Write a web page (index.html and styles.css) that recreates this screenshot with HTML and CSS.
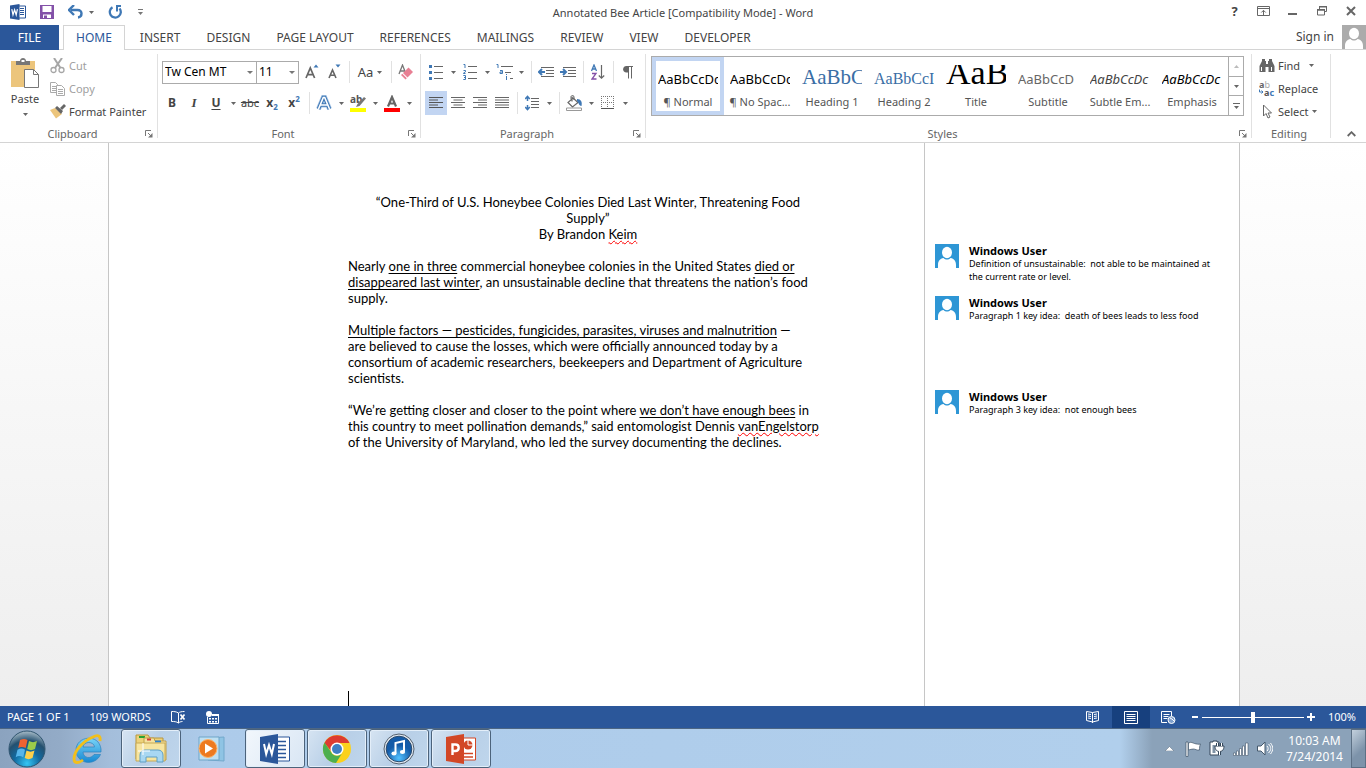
FILE: index.html
```html
<!DOCTYPE html>
<html lang="en">
<head>
<meta charset="utf-8">
<title>Annotated Bee Article [Compatibility Mode] - Word</title>
<link rel="stylesheet" href="styles.css">
</head>
<body>
<svg class="defs" aria-hidden="true">
  <symbol id="caret" viewBox="0 0 5 3"><path d="M0 0h5L2.5 3z" fill="#666"/></symbol>
  <symbol id="launcher" viewBox="0 0 8 8"><path d="M.5 6V.5H6" fill="none" stroke="#777"/><path d="M3 3l3 3" stroke="#777"/><path d="M7.500 3v4.500H3z" fill="#777"/></symbol>
  <symbol id="person" viewBox="0 0 24 24"><ellipse cx="12" cy="8.500" rx="5" ry="5.700" fill="#fff"/><path d="M3 24v-3c0-4 2-6.500 5.500-7 2 2 5 2 7 0 3.500.5 5.500 3 5.500 7v3z" fill="#fff"/></symbol>
</svg>

<header class="titlebar">
  <div class="quick">
    <svg width="16" height="16" viewBox="0 0 16 16"><path d="M8 2h7.500v12H8z" fill="#fff" stroke="#2b579a"/><path d="M10 4.500h4M10 6.500h4M10 8.500h4M10 10.500h4" stroke="#2b579a"/><path d="M0 1.500L9.500 0v16L0 14.500z" fill="#2b579a"/><path d="M1.800 5.200l1.200 5.600 1.600-5 1.600 5 1.200-5.600" fill="none" stroke="#fff" stroke-width="1.200"/></svg>
    <button class="q-btn save" aria-label="Save"><svg width="14" height="14" viewBox="0 0 14 14"><path d="M0 0h14v14H0z" fill="#8351a8"/><path d="M2.500 1h9v6h-9zM3 9.500h8V13H3z" fill="#fff"/><path d="M4 10.500h3V14H4z" fill="#8351a8"/></svg></button>
    <button class="q-btn undo" aria-label="Undo"><svg width="15" height="14" viewBox="0 0 15 14"><path d="M3 5h6.500c5.500 0 5 7 .5 7.500" fill="none" stroke="#3f78b5" stroke-width="2.400"/><path d="M6 0L1 5l5 5" fill="none" stroke="#3f78b5" stroke-width="2.400"/></svg></button>
    <button class="q-btn" aria-label="Undo list"><svg width="5" height="3"><use href="#caret"/></svg></button>
    <button class="q-btn redo" aria-label="Repeat"><svg width="15" height="14" viewBox="0 0 15 14"><path d="M4.500 2.300A5.500 5.500 0 1 0 11.500 3.500" fill="none" stroke="#3f78b5" stroke-width="2.300"/><path d="M8 1h5M9 .5v6" fill="none" stroke="#3f78b5" stroke-width="2"/></svg></button>
    <button class="q-btn" aria-label="Customize Quick Access Toolbar"><svg width="5" height="6" viewBox="0 0 5 6"><path d="M0 .5h5" stroke="#777"/><path d="M0 3h5L2.500 6z" fill="#777"/></svg></button>
  </div>
  <h1 class="window-title">Annotated Bee Article [Compatibility Mode] - Word</h1>
  <div class="window-controls">
    <button class="help" aria-label="Help">?</button>
    <button aria-label="Ribbon Display Options"><svg width="13" height="10" viewBox="0 0 13 10"><path d="M.5.5h12v9H.5zM.5 2.500h12" fill="none" stroke="#666"/><path d="M6.500 9V4.500M4.300 6.500l2.200-2.200 2.200 2.200" fill="none" stroke="#666"/></svg></button>
    <button aria-label="Minimize"><svg width="9" height="10" viewBox="0 0 9 10"><path d="M0 7h9v2H0z" fill="#666"/></svg></button>
    <button aria-label="Restore Down"><svg width="10" height="10" viewBox="0 0 10 10"><path d="M2.500 3V.5h7v5H8" fill="none" stroke="#666"/><path d="M.5 4h7v5h-7z" fill="none" stroke="#666"/><path d="M0 3h8v1.500H0zM2 0h8v1.500H2z" fill="#666"/></svg></button>
    <button aria-label="Close"><svg width="10" height="10" viewBox="0 0 10 10"><path d="M1 1l8 8M9 1L1 9" stroke="#666" stroke-width="2"/></svg></button>
  </div>
</header>

<nav class="tabs">
  <a class="tab file" href="#">FILE</a>
  <a class="tab active" href="#">HOME</a>
  <a class="tab" href="#">INSERT</a>
  <a class="tab" href="#">DESIGN</a>
  <a class="tab" href="#">PAGE LAYOUT</a>
  <a class="tab" href="#">REFERENCES</a>
  <a class="tab" href="#">MAILINGS</a>
  <a class="tab" href="#">REVIEW</a>
  <a class="tab" href="#">VIEW</a>
  <a class="tab" href="#">DEVELOPER</a>
  <a class="signin" href="#">Sign in<svg class="account" width="24" height="24"><use href="#person"/></svg></a>
</nav>

<div class="ribbon">
  <section class="group clipboard">
    <div class="group-body clip-body">
      <button class="paste"><svg width="30" height="31" viewBox="0 0 30 31"><path d="M1 3h24v26H1z" fill="#ecc57c"/><path d="M6 3h4c0-4 6-4 6 0h4v4H6z" fill="#777"/><path d="M11.500 2h3v2h-3z" fill="#fff"/><path d="M14.500 11.500h9l5 5v13h-14z" fill="#fff" stroke="#777"/><path d="M23.500 11.500v5h5" fill="none" stroke="#777"/></svg><span>Paste</span><svg width="5" height="3"><use href="#caret"/></svg></button>
      <div class="clip-list">
        <button class="row-btn off"><svg width="16" height="16" viewBox="0 0 16 16"><path d="M4 0l6.500 10M12 0L5 10" stroke="#a6a6a6" stroke-width="2"/><circle cx="3.500" cy="12" r="2.500" fill="none" stroke="#a6a6a6" stroke-width="1.300"/><circle cx="11.500" cy="12" r="2.500" fill="none" stroke="#a6a6a6" stroke-width="1.300"/></svg>Cut</button>
        <button class="row-btn off"><svg width="16" height="16" viewBox="0 0 16 16"><path d="M.5 1.500h5l2 2v8h-7zM2 5.500h4M2 7.500h4M2 9.500h4" fill="none" stroke="#aaa"/><path d="M6.500 4.500h5l3 3v7h-8z" fill="#fff" stroke="#aaa"/><path d="M8 8.500h5M8 10.500h5M8 12.500h5" stroke="#aaa"/></svg>Copy</button>
        <button class="row-btn"><svg width="16" height="16" viewBox="0 0 16 16"><path d="M0 6l5-2 7 6-6 4.500z" fill="#ecc57c"/><path d="M5 4l2-2 6 5-2 3z" fill="#666"/><path d="M10 4l4-4 2 2-4 4z" fill="#666"/></svg>Format Painter</button>
      </div>
    </div>
    <div class="group-label"><span>Clipboard</span><button aria-label="Clipboard options"><svg width="8" height="8"><use href="#launcher"/></svg></button></div>
  </section>

  <section class="group font">
    <div class="group-body">
      <div class="tools combos">
        <span class="combo family"><select aria-label="Font"><option>Tw Cen MT</option></select></span>
        <span class="combo size"><select aria-label="Font size"><option>11</option></select></span>
        <button class="tool" aria-label="Increase Font Size"><svg width="14" height="16" viewBox="0 0 14 16"><path d="M1 14L5.300 4l4.300 10M2.500 10.700h5.800" fill="none" stroke="#666" stroke-width="1.700"/><path d="M8.500 3.500l2.500-3 2.500 3z" fill="#3f78b5"/></svg></button>
        <button class="tool" aria-label="Decrease Font Size"><svg width="14" height="16" viewBox="0 0 14 16"><path d="M2 14l3.500-8L9 14M3.300 11.300h4.500" fill="none" stroke="#666" stroke-width="1.600"/><path d="M8.500.5L11 3.500l2.500-3z" fill="#3f78b5"/></svg></button>
        <i class="sep"></i>
        <button class="tool case">Aa <svg width="5" height="3"><use href="#caret"/></svg></button>
        <i class="sep"></i>
        <button class="tool" aria-label="Clear Formatting"><svg width="16" height="16" viewBox="0 0 16 16"><path d="M1 10L4.500 1 8 10M2.300 7h4.500" fill="none" stroke="#777" stroke-width="1.300"/><path d="M10.500 3.500L15 8l-5.500 5.500L5 9z" fill="#e87f93"/><path d="M4.300 9.800l4.500 4.500-1.300 1.200L3 11z" fill="#e87f93"/></svg></button>
      </div>
      <div class="tools row2">
        <button class="tool b">B</button><button class="tool i">I</button><button class="tool u">U</button><button class="drop" aria-label="Underline styles"><svg width="5" height="3"><use href="#caret"/></svg></button>
        <button class="tool s">abc</button><button class="tool b">x<sub>2</sub></button><button class="tool b">x<sup>2</sup></button>
        <i class="sep"></i>
        <button class="tool" aria-label="Text Effects"><svg width="16" height="16" viewBox="0 0 16 16"><path d="M2.500 14L7.300 2.500h1.400l4.800 11.500M4.700 10h6.600" fill="none" stroke="#a9c6e6" stroke-width="5"/><path d="M2.500 14L7.300 2.500h1.400l4.800 11.500M4.700 10h6.600" fill="none" stroke="#3f78b5" stroke-width="3.600"/><path d="M2.500 14L7.300 2.500h1.400l4.800 11.500M4.700 10h6.600" fill="none" stroke="#fff" stroke-width="1.600"/></svg></button><button class="drop" aria-label="Effects list"><svg width="5" height="3"><use href="#caret"/></svg></button>
        <button class="tool" aria-label="Highlight Color"><svg class="over" width="17" height="17" viewBox="0 0 17 17"><text x="0" y="8" font-size="10" font-weight="700" fill="#555">ab</text><path d="M14 2l2 1.500L9.500 11 6 12l1.500-3z" fill="#777"/><path d="M0 13h16v4H0z" fill="#ff0"/></svg></button><button class="drop" aria-label="Highlight list"><svg width="5" height="3"><use href="#caret"/></svg></button>
        <button class="tool" aria-label="Font Color"><svg width="17" height="17" viewBox="0 0 17 17"><path d="M4 11.500L8 2l4 9.500M5.500 8.500h5" fill="none" stroke="#666" stroke-width="2.200"/><path d="M0 13h16v4H0z" fill="red"/></svg></button><button class="drop" aria-label="Font color list"><svg width="5" height="3"><use href="#caret"/></svg></button>
      </div>
    </div>
    <div class="group-label"><span>Font</span><button aria-label="Font options"><svg width="8" height="8"><use href="#launcher"/></svg></button></div>
  </section>

  <section class="group paragraph">
    <div class="group-body">
      <div class="tools combos">
        <button class="tool" aria-label="Bullets"><svg width="14" height="16" viewBox="0 0 14 16"><path d="M5 2.500h9M5 8.500h9M5 14.500h9" stroke="#666"/><path d="M0 1h3v3H0zM0 7h3v3H0zM0 13h3v3H0z" fill="#3f78b5"/></svg></button><button class="drop" aria-label="Bullet list"><svg width="5" height="3"><use href="#caret"/></svg></button>
        <button class="tool" aria-label="Numbering"><svg width="14" height="16" viewBox="0 0 14 16"><path d="M5 2.500h9M5 8.500h9M5 14.500h9" stroke="#666"/><path d="M.5.5H2V4M.5 6.500h2v1.300l-2 1.200v.5h2M.3 11.500h2.200v4H.3M1 13.500h1.500" fill="none" stroke="#3f78b5"/></svg></button><button class="drop" aria-label="Numbering list"><svg width="5" height="3"><use href="#caret"/></svg></button>
        <button class="tool" aria-label="Multilevel List"><svg width="17" height="16" viewBox="0 0 17 16"><path d="M5 2.500h12M9 8.500h6M14 14.500h3" stroke="#666"/><path d="M.5.500H2V4M4 6.500h2.500v3H4V8h2.500M10.500 10v1M10.500 12v4" fill="none" stroke="#3f78b5"/></svg></button><button class="drop" aria-label="Multilevel styles"><svg width="5" height="3"><use href="#caret"/></svg></button>
        <i class="sep"></i>
        <button class="tool" aria-label="Decrease Indent"><svg width="16" height="12" viewBox="0 0 16 12"><path d="M3 1.500h13M8 4.500h8M8 7.500h8M3 10.500h13" stroke="#666"/><path d="M7 6H2M4 3L1 6l3 3" fill="none" stroke="#3f78b5" stroke-width="2"/></svg></button>
        <button class="tool" aria-label="Increase Indent"><svg width="16" height="12" viewBox="0 0 16 12"><path d="M3 1.500h13M8 4.500h8M8 7.500h8M3 10.500h13" stroke="#666"/><path d="M0 6h5M3 3l3 3-3 3" fill="none" stroke="#3f78b5" stroke-width="2"/></svg></button>
        <i class="sep"></i>
        <button class="tool" aria-label="Sort"><svg width="14" height="16" viewBox="0 0 14 16"><path d="M.5 7L3 1l2.500 6M1.300 5h3.400" fill="none" stroke="#3f78b5" stroke-width="1.300"/><path d="M1 9.500h4L1 15h4.500" fill="none" stroke="#8351a8" stroke-width="1.300"/><path d="M10.500 1v13M7.800 11.500l2.700 2.700 2.700-2.700" fill="none" stroke="#666" stroke-width="1.200"/></svg></button>
        <i class="sep"></i>
        <button class="tool" aria-label="Show paragraph marks"><svg width="10" height="13" viewBox="0 0 10 13"><path d="M5 0H3.500C-1 0-1 6.500 3.500 6.500H5z" fill="#666"/><path d="M5.500 0v12.500M8.500 0v12.500M3 .5h7" stroke="#666"/></svg></button>
      </div>
      <div class="tools">
        <button class="tool on" aria-label="Align Left"><svg width="14" height="12" viewBox="0 0 14 12"><path d="M0 .5h14M0 3h9M0 5.500h14M0 8h9M0 10.500h14" stroke="#555"/></svg></button>
        <button class="tool" aria-label="Center"><svg width="14" height="12" viewBox="0 0 14 12"><path d="M0 .5h14M2.500 3h9M0 5.500h14M2.500 8h9M0 10.500h14" stroke="#666"/></svg></button>
        <button class="tool" aria-label="Align Right"><svg width="14" height="12" viewBox="0 0 14 12"><path d="M0 .5h14M5 3h9M0 5.500h14M5 8h9M0 10.500h14" stroke="#666"/></svg></button>
        <button class="tool" aria-label="Justify"><svg width="14" height="12" viewBox="0 0 14 12"><path d="M0 .5h14M0 3h14M0 5.500h14M0 8h14M0 10.500h14" stroke="#666"/></svg></button>
        <i class="sep"></i>
        <button class="tool" aria-label="Line Spacing"><svg width="14" height="16" viewBox="0 0 14 16"><path d="M6 3.500h8M6 6.500h8M6 9.500h8M6 12.500h8" stroke="#666"/><path d="M2.500 1v5M.2 4l2.300-2.700L4.800 4M2.500 10v5M.2 12l2.300 2.700L4.800 12" fill="none" stroke="#3f78b5" stroke-width="1.500"/></svg></button><button class="drop" aria-label="Spacing list"><svg width="5" height="3"><use href="#caret"/></svg></button>
        <i class="sep"></i>
        <button class="tool" aria-label="Shading"><svg width="17" height="16" viewBox="0 0 17 16"><path d="M6 1.500v5M7 3l5 4.500L6.500 12 2 7.500z" fill="none" stroke="#666" stroke-width="1.200"/><path d="M5 4V1.500C5.500 0 8 0 8 2v3" fill="none" stroke="#666"/><path d="M11 4c4 0 5.500 3 4.500 7-3-.5-2.500-3-4.500-5z" fill="#3f78b5"/><path d="M.5 13h15v2.500H.5z" fill="#fff" stroke="#999"/></svg></button><button class="drop" aria-label="Shading list"><svg width="5" height="3"><use href="#caret"/></svg></button>
        <button class="tool" aria-label="Borders"><svg width="14" height="14" viewBox="0 0 14 14"><path d="M0 .5h13M0 6.500h13M.5 0v13M6.500 0v13M12.500 0v13" stroke="#777" stroke-dasharray="1 1"/><path d="M0 12.500h13" stroke="#555"/></svg></button><button class="drop" aria-label="Border list"><svg width="5" height="3"><use href="#caret"/></svg></button>
      </div>
    </div>
    <div class="group-label"><span>Paragraph</span><button aria-label="Paragraph options"><svg width="8" height="8"><use href="#launcher"/></svg></button></div>
  </section>

  <section class="group styles">
    <div class="group-body">
      <div class="gallery">
        <button class="style chosen"><span class="sample">AaBbCcDc</span><span class="name">¶ Normal</span></button>
        <button class="style"><span class="sample">AaBbCcDc</span><span class="name">¶ No Spac...</span></button>
        <button class="style"><span class="sample h-one">AaBbC</span><span class="name">Heading 1</span></button>
        <button class="style"><span class="sample h-two">AaBbCcI</span><span class="name">Heading 2</span></button>
        <button class="style"><span class="sample title">AaB</span><span class="name">Title</span></button>
        <button class="style"><span class="sample subtitle">AaBbCcD</span><span class="name">Subtitle</span></button>
        <button class="style"><span class="sample subtle">AaBbCcDc</span><span class="name">Subtle Em...</span></button>
        <button class="style"><span class="sample emph">AaBbCcDc</span><span class="name">Emphasis</span></button>
        <div class="scroller">
          <button aria-label="Previous row"><svg width="5" height="3" viewBox="0 0 5 3"><path d="M0 3h5L2.500 0z" fill="#bbb"/></svg></button>
          <button aria-label="Next row"><svg width="5" height="3"><use href="#caret"/></svg></button>
          <button aria-label="More styles"><svg width="7" height="6" viewBox="0 0 7 6"><path d="M0 .5h7" stroke="#666"/><path d="M1 3h5L3.500 6z" fill="#666"/></svg></button>
        </div>
      </div>
    </div>
    <div class="group-label"><span>Styles</span><button aria-label="Styles options"><svg width="8" height="8"><use href="#launcher"/></svg></button></div>
  </section>

  <section class="group editing">
    <div class="group-body edit-list">
      <button class="row-btn"><svg width="16" height="14" viewBox="0 0 16 14"><path d="M3 0h3v2h1v3h2V2h1V0h3v2l2.500 5v6H9.500V8h-3v5H.5V7L3 2z" fill="#666"/><path d="M2.500 8v4M12.500 8v4" stroke="#fff"/></svg>Find <svg class="gap" width="5" height="3"><use href="#caret"/></svg></button>
      <button class="row-btn"><svg width="16" height="16" viewBox="0 0 16 16"><text x="0" y="7" font-size="9" font-weight="700" fill="#666">a<tspan fill="#aaa" font-weight="400">b</tspan></text><text x="5" y="15" font-size="9" font-weight="700" fill="#555">a<tspan fill="#3f78b5">c</tspan></text><path d="M.5 8.500v2.500H4M2.500 9.500L4 11l-1.500 1.500" fill="none" stroke="#3f78b5"/></svg>Replace</button>
      <button class="row-btn"><svg width="16" height="16" viewBox="0 0 16 16"><path d="M4.500 1v11l2.500-2.500 2 4.500 2-1-2-4h3.500z" fill="#fff" stroke="#666"/></svg>Select<svg width="5" height="3"><use href="#caret"/></svg></button>
    </div>
    <div class="group-label"><span>Editing</span></div>
  </section>
  <button class="collapse" aria-label="Collapse the Ribbon"><svg width="9" height="6" viewBox="0 0 9 6"><path d="M.7 5l3.800-3.800L8.300 5" fill="none" stroke="#666" stroke-width="1.800"/></svg></button>
</div>

<main class="workspace">
  <article class="page">
    <p class="heading">“One-Third of U.S. Honeybee Colonies Died Last Winter, Threatening Food<br>Supply”<br>By Brandon <span class="typo">Keim</span></p>
    <p>Nearly <u>one in three</u> commercial honeybee colonies in the United States <u>died or<br>disappeared last winter</u>, an unsustainable decline that threatens the nation’s food<br>supply.</p>
    <p><u>Multiple factors — pesticides, fungicides, parasites, viruses and malnutrition</u> —<br>are believed to cause the losses, which were officially announced today by a<br>consortium of academic researchers, beekeepers and Department of Agriculture<br>scientists.</p>
    <p>“We’re getting closer and closer to the point where <u>we don’t have enough bees</u> in<br>this country to meet pollination demands,” said entomologist Dennis <span class="typo">vanEngelstorp</span><br>of the University of Maryland, who led the survey documenting the declines.</p>
    <div class="cursor"></div>
  </article>
  <aside class="comments">
    <div class="comment"><svg class="avatar" width="24" height="24"><use href="#person"/></svg><div><h2>Windows User</h2><p>Definition of unsustainable: &nbsp;not able to be maintained at<br>the current rate or level.</p></div></div>
    <div class="comment"><svg class="avatar" width="24" height="24"><use href="#person"/></svg><div><h2>Windows User</h2><p>Paragraph 1 key idea: &nbsp;death of bees leads to less food</p></div></div>
    <div class="comment third"><svg class="avatar" width="24" height="24"><use href="#person"/></svg><div><h2>Windows User</h2><p>Paragraph 3 key idea: &nbsp;not enough bees</p></div></div>
  </aside>
</main>

<footer class="status">
  <span class="pages">PAGE 1 OF 1</span>
  <span class="words">109 WORDS</span>
  <button class="proof" aria-label="Proofing errors"><svg width="15" height="13" viewBox="0 0 15 13"><path d="M7.500 2C5 .5 3 .5.500.500v10c2.500 0 5 0 7 1.500 1-1 2-1.300 4-1.500M7.500 2v10M7.500 2c1-1 3-1.500 6-1.500" fill="none" stroke="#fff"/><path d="M9.500 3.500l4 5M13.500 3.500l-4 5" stroke="#fff" stroke-width="1.700"/></svg></button>
  <button aria-label="Macro recording"><svg width="13" height="13" viewBox="0 0 13 13"><path d="M1.500 6v6.500h11v-9H6" fill="none" stroke="#fff"/><path d="M6 3h7v2H6zM3 7h2v1.500H3zM6 7h2v1.500H6zM9 7h2v1.500H9zM3 10h2v1.500H3zM6 10h2v1.500H6zM9 10h2v1.500H9z" fill="#fff"/><circle cx="3" cy="3" r="3" fill="#fff"/></svg></button>
  <div class="views">
    <button aria-label="Read Mode"><svg width="13" height="12" viewBox="0 0 13 12"><path d="M6.500 1.500L.5.500v9l6 1.500 6-1.500v-9zM6.500 1.500V12M2 3l3 .5M2 5l3 .5M2 7l3 .5M11 3l-3 .5M11 5l-3 .5M11 7l-3 .5" fill="none" stroke="#fff"/></svg></button>
    <button class="current" aria-label="Print Layout"><svg width="14" height="13" viewBox="0 0 14 13"><path d="M.5.500h13v12H.5zM2.500 3.500h9M2.500 5.500h9M2.500 7.500h9M2.500 9.500h9" fill="none" stroke="#fff"/></svg></button>
    <button aria-label="Web Layout"><svg width="15" height="13" viewBox="0 0 15 13"><path d="M6 11.500H.5V.5h10V5M2.500 3.500h6M2.500 5.500h5M2.500 7.500h4" fill="none" stroke="#fff"/><circle cx="10.500" cy="9" r="3.500" fill="#7fa0cc" stroke="#fff"/><path d="M9 7l2 1 2 2" stroke="#fff" fill="none"/></svg></button>
    <button class="zoom" aria-label="Zoom out"><svg width="6" height="8" viewBox="0 0 6 8"><path d="M0 3h6v2H0z" fill="#fff"/></svg></button>
    <input class="slider" type="range" aria-label="Zoom" min="0" max="100" value="50">
    <button class="zoom" aria-label="Zoom in"><svg width="8" height="8" viewBox="0 0 8 8"><path d="M0 3h8v2H0zM3 0h2v8H3z" fill="#fff"/></svg></button>
    <span class="percent">100%</span>
  </div>
</footer>

<div class="taskbar">
  <button class="start" aria-label="Start"><svg width="38" height="38" viewBox="0 0 38 38"><defs><radialGradient id="orb" cx=".5" cy=".9" r=".9"><stop offset="0" stop-color="#35c6f4"/><stop offset=".4" stop-color="#126aa0"/><stop offset=".7" stop-color="#24506f"/><stop offset="1" stop-color="#a9bdc9"/></radialGradient></defs><circle cx="19" cy="19" r="18" fill="url(#orb)" stroke="#305570"/><path d="M12 10c3-1.500 5-1.500 7.500 0L17.700 18c-3-1.500-5-1.500-7.500 0z" fill="#ee6231"/><path d="M21 11c3 1.500 5 1.500 8 0l-2 8c-3 1.500-5 1.500-7.800 0z" fill="#9bcb4a"/><path d="M9.500 19.700c3-1.500 5-1.500 7.500 0l-1.800 7.500c-3-1.500-5-1.500-7.500 0z" fill="#56b5ea"/><path d="M18.500 20.500c3 1.500 5 1.500 8 0l-2 7.500c-3 1.500-5 1.500-7.800 0z" fill="#fcd04b"/></svg></button>
  <button class="task ie" aria-label="Internet Explorer"><svg width="34" height="34" viewBox="0 0 34 34"><defs><linearGradient id="ieg" x2="0" y2="1"><stop stop-color="#79d4f7"/><stop offset="1" stop-color="#1688d3"/></linearGradient></defs><path d="M30 20H12c0 6 8 7.500 11 2.500h6.500C24 35 5 32 5 18 5 4 28 1 30 17zM12 15h11.500c-.5-6-11-6-11.500 0z" fill="url(#ieg)" stroke="#2c83bd" stroke-width=".7"/><path d="M29 9c1-5-2-7-7-4C12 9 3 19 3 27c0 5 5 4 9 1" fill="none" stroke="#f2bf1b" stroke-width="2.800"/></svg></button>
  <button class="task open" aria-label="File Explorer"><svg width="34" height="32" viewBox="0 0 34 32"><path d="M2 7V2h12l2 3h13v21H2z" fill="#edd27a" stroke="#b8963e"/><path d="M5 3h6v2H5z" fill="#27a333"/><path d="M10 8V5h10l1 3h11v19H10z" fill="#f5e3a0" stroke="#c1a04a"/><path d="M13 5.500h4v2h-4z" fill="#d23d35"/><path d="M21 7.500h6v2h-6z" fill="#2e82cc"/><path d="M2 10h29v18H2z" fill="#f7e5a0" stroke="#c7a955"/><path d="M6 29V22c0-3 2-5 5-5h13c3 0 5 2 5 5v7h-6v-5H12v5z" fill="#a8d7f2" stroke="#5f9fc5"/><path d="M9 10v12M4 18h12" stroke="#fff"/></svg></button>
  <button class="task wmp" aria-label="Media Player"><svg width="30" height="28" viewBox="0 0 30 28"><path d="M12 3l16-1v24l-16-1z" fill="#8fc4e4" stroke="#73a9cc"/><path d="M3 2h20v23H3z" fill="#bfe0f2" stroke="#6fa5c8"/><circle cx="12" cy="13.500" r="9" fill="#ed7a20" stroke="#fbb46c"/><path d="M9 8.500l8 5-8 5z" fill="#fff"/></svg></button>
  <button class="task open front" aria-label="Word"><svg width="30" height="30" viewBox="0 0 30 30"><path d="M16 3h13.500v24H16z" fill="#fff" stroke="#2b579a"/><path d="M18 7.500h8M18 11.500h8M18 15.500h8M18 19.500h8M18 23.500h8" stroke="#2b579a" stroke-width="1.500"/><path d="M0 3l18-3v30L0 27z" fill="#2b579a"/><path d="M4 10l2.200 10L9 11l2.800 9L14 10" fill="none" stroke="#fff" stroke-width="2"/></svg></button>
  <button class="task open" aria-label="Chrome"><svg width="30" height="30" viewBox="0 0 30 30"><circle cx="15" cy="15" r="14" fill="#fbd11d"/><path d="M2.500 9A14 14 0 0 1 27.500 9H15a6.500 6.500 0 0 0-6 8z" fill="#dd3b31"/><path d="M2.500 8.500A14 14 0 0 0 14 29l6.500-10.500A6.500 6.500 0 0 1 9 18z" fill="#4caf50"/><circle cx="15" cy="15" r="6.500" fill="#fff"/><circle cx="15" cy="15" r="5" fill="#3f7fc4"/></svg></button>
  <button class="task open" aria-label="iTunes"><svg width="32" height="32" viewBox="0 0 32 32"><defs><radialGradient id="itn" cy=".85"><stop stop-color="#52c1ff"/><stop offset="1" stop-color="#145ba8"/></radialGradient></defs><circle cx="16" cy="16" r="15" fill="#dfe6ee" stroke="#53606e"/><circle cx="16" cy="16" r="12.800" fill="url(#itn)" stroke="#2b4c6e"/><path d="M12.500 20V10l8.500-2v10.500" fill="none" stroke="#fff" stroke-width="2"/><ellipse cx="11" cy="20.500" rx="2.600" ry="2" fill="#fff"/><ellipse cx="19.500" cy="19" rx="2.600" ry="2" fill="#fff"/></svg></button>
  <button class="task open" aria-label="PowerPoint"><svg width="30" height="30" viewBox="0 0 30 30"><path d="M16 4h13.500v22H16z" fill="#fff" stroke="#d24726"/><circle cx="22" cy="11" r="4.500" fill="#d24726"/><path d="M22 11V6M22 11h5" stroke="#fff"/><path d="M18 19.500h9M18 23h9" stroke="#d24726" stroke-width="1.500"/><path d="M0 3l18-3v30L0 27z" fill="#d24726"/><path d="M6.500 21V10.500h2.800c4.500 0 4.500 6.500 0 6.500H7" fill="none" stroke="#fff" stroke-width="2.400"/></svg></button>
  <div class="tray">
    <button aria-label="Show hidden icons"><svg width="9" height="5" viewBox="0 0 9 5"><path d="M0 5l4.500-4.500L9 5z" fill="#fff" stroke="#56697d" stroke-width=".5"/></svg></button>
    <button aria-label="Action Center"><svg width="17" height="16" viewBox="0 0 17 16"><path d="M1 1h2v14.500H1z" fill="#fff" stroke="#3e5165" stroke-width=".7"/><path d="M3.500 2c3-1.500 4 0 6 .5s4 1 6 .5c-1 2-1 4-1 6-3 .5-4-1-6-1s-3 .5-5 1z" fill="#fff" stroke="#3e5165" stroke-width=".7"/></svg></button>
    <button aria-label="Power"><svg width="16" height="17" viewBox="0 0 16 17"><path d="M4 1h4v1h2v13H1V2h3z" fill="#fff" stroke="#34475a"/><path d="M3.500 5h3v8h-3z" fill="#7f92a5"/><path d="M8.500 3v3M12.500 3v3M10.500 11v4" stroke="#34475a" stroke-width="3"/><path d="M6 6h9c0 4-2 5.500-4.500 5.500S6 10 6 6z" fill="#fff" stroke="#34475a"/><path d="M8.500 3v3M12.500 3v3M10.500 11v4" stroke="#fff"/></svg></button>
    <button aria-label="Network"><svg width="16" height="14" viewBox="0 0 16 14"><path d="M.5 11h2v2.500h-2zM3.500 9h2v4.500h-2zM6.500 6.500h2v7h-2zM9.500 4h2v9.500h-2zM12.500 1h2.500v12.500h-2.500z" fill="#fff" stroke="#44586c" stroke-width=".6"/></svg></button>
    <button aria-label="Volume"><svg width="16" height="15" viewBox="0 0 16 15"><path d="M.5 5H4l4-4v13L4 10H.5z" fill="#fff" stroke="#44586c"/><path d="M10 5c1.500 1.500 1.500 4 0 5M11.500 3c3 3 3 6 0 9M13.500 2c3 4 3 7 0 11" fill="none" stroke="#fff"/></svg></button>
    <div class="clock"><span>10:03 AM</span><span>7/24/2014</span></div>
    <button class="desktop" aria-label="Show desktop"></button>
  </div>
</div>
</body>
</html>
```
FILE: styles.css
```css
* { box-sizing: border-box; }
body {
  margin: 0;
  height: 100vh;
  display: flex;
  flex-direction: column;
  overflow: hidden;
  background: #fff;
  color: #444;
  font: 12px/16px "Noto Sans", "Open Sans", sans-serif;
}
button {
  margin: 0;
  padding: 0;
  border: 0;
  background: none;
  color: inherit;
  font: inherit;
  display: flex;
  align-items: center;
  justify-content: center;
}
svg { flex: none; }
a { color: inherit; text-decoration: none; }
h1, h2, p { margin: 0; font-weight: 400; }
.defs { position: absolute; width: 0; height: 0; }

/* Title bar */
.titlebar {
  flex: none;
  display: grid;
  grid-template-columns: 1fr auto 1fr;
  align-items: center;
  height: 25px;
}
.quick { display: flex; align-items: center; padding-left: 10px; height: 24px; align-self: start; }
.save { margin-left: 14px; }
.undo { margin: 0 6px 0 14px; }
.redo { margin: 0 15px 0 14px; }
.window-title { font-size: 11px; line-height: 16px; }
.window-controls { display: flex; justify-content: flex-end; height: 22px; padding-right: 1px; align-self: start; }
.window-controls button { width: 29px; }
.window-controls .help { font-weight: 700; font-size: 13px; }

/* Ribbon tabs */
.tabs {
  flex: none;
  display: flex;
  height: 25px;
  border-bottom: 1px solid #d4d4d4;
  font-size: 12px;
}
.tab { padding: 0 12px; border: 1px solid transparent; border-bottom: 0; line-height: 24px; white-space: nowrap; }
.tab.file { width: 59px; margin-right: 4px; background: #2b579a; color: #fff; text-align: center; height: 25px; }
.tab.active { height: 25px; margin-right: 2px; border-color: #d4d4d4; background: #fff; color: #2b579a; }
.signin { margin-left: auto; display: flex; align-items: center; gap: 8px; }
.account { background: #ababab; }

/* Ribbon */
.ribbon {
  flex: none;
  display: flex;
  height: 93px;
  padding: 4px 0;
  border-bottom: 1px solid #d4d4d4;
  font-size: 11px;
}
.group { flex: none; display: flex; flex-direction: column; border-right: 1px solid #e1e1e1; }
.group-body { flex: 1; min-height: 0; }
.clipboard { width: 158px; }
.font { width: 263px; }
.paragraph { width: 225px; }
.styles { flex: 1; min-width: 0; }
.editing { width: 79px; }
.group-label { flex: none; display: flex; align-items: center; height: 16px; margin-bottom: -4px; padding-right: 4px; color: #666; }
.group-label span { flex: 1; text-align: center; }
.clip-body { display: flex; }
.paste { width: 50px; flex-direction: column; justify-content: flex-start; padding-top: 4px; }
.paste svg + span { line-height: 20px; }
.paste span + svg { margin-top: 4px; }
.clip-list, .edit-list { display: flex; flex-direction: column; }
.row-btn { flex: none; height: 23px; gap: 3px; justify-content: flex-start; white-space: nowrap; }
.row-btn .gap { margin-left: 6px; }
.off { color: #a0a0a0; }
.edit-list { padding-left: 7px; }
.tools { display: flex; align-items: center; height: 24px; padding-left: 4px; }
.combos { margin: 6px 0 7px; }
.row2 { padding-left: 3px; }
.tool { width: 22px; height: 24px; flex: none; }
.drop { width: 12px; height: 24px; flex: none; }
.on { background: #c2d5f2; }
.over { overflow: visible; }
.sep { width: 1px; height: 22px; margin: 0 3px 0 4px; background: #e1e1e1; }
.combo { position: relative; height: 23px; }
.combo::after {
  content: "";
  position: absolute;
  right: 4px;
  top: 10px;
  border: 3px solid transparent;
  border-top-color: #777;
  border-bottom: 0;
}
.combo select {
  appearance: none;
  width: 100%;
  height: 100%;
  padding: 0 2px;
  border: 1px solid #ababab;
  border-radius: 0;
  background: #fff;
  color: #000;
  font: 12px/20px "Noto Sans", "Open Sans", sans-serif;
}
.family { width: 95px; }
.size { width: 43px; margin: 0 2px 0 -1px; }
.case { width: 34px; gap: 4px; font-size: 13px; }
.b { font-weight: 700; font-size: 12px; }
.i { font: italic 700 13px "Liberation Serif", serif; }
.u { font-weight: 700; font-size: 12px; text-decoration: underline; text-underline-offset: 2px; }
.s { font-size: 11px; text-decoration: line-through; }
.tool sub, .tool sup { font-size: 8px; line-height: 8px; color: #3f78b5; }
.tool sub { align-self: flex-end; margin-bottom: 4px; }
.tool sup { align-self: flex-start; margin-top: 4px; }

/* Style gallery */
.gallery { display: flex; height: 60px; margin: 2px 7px 0 5px; border: 1px solid #ababab; }
.style {
  flex: 1;
  min-width: 0;
  flex-direction: column;
  justify-content: flex-start;
  border: 4px solid transparent;
}
.style.chosen { border-color: #c2d5f2; }
.sample {
  flex: none;
  display: flex;
  align-items: flex-end;
  width: 60px;
  height: 24px;
  margin: 4px 0 5px;
  overflow: hidden;
  color: #000;
  white-space: nowrap;
  font: 13px/20px "Noto Sans", "Open Sans", sans-serif;
}
.name { line-height: 16px; white-space: nowrap; color: #555; }
.sample.h-one { font: 21px/24px "Liberation Serif", serif; color: #3a6ea5; }
.sample.h-two { font: 16px/20px "Liberation Serif", serif; color: #3a6ea5; }
.sample.title { font: 34px/32px "Liberation Serif", serif; }
.sample.subtitle { color: #666; }
.sample.subtle { font-style: italic; color: #444; }
.sample.emph { font-style: italic; }
.scroller { width: 15px; display: flex; flex-direction: column; border-left: 1px solid #ababab; }
.scroller button { flex: 1; }
.scroller button + button { border-top: 1px solid #ababab; }
.collapse { flex: none; width: 35px; padding: 76px 0 0 6px; height: 84px; }

/* Document */
.workspace { flex: 1; min-height: 0; display: flex; justify-content: center; padding-right: 18px; background: linear-gradient(#fff, #eee); }
.page {
  flex: 0 1 817px;
  display: flex;
  flex-direction: column;
  padding: 51px 96px 0 239px;
  border: solid #c6c6c6;
  border-width: 0 1px;
  background: #fff;
  color: #000;
  font: 13px/16px Lato, sans-serif;
  white-space: nowrap;
}
.page p { margin-bottom: 16px; }
.page .heading { text-align: center; }
u { text-underline-offset: 2px; }
.typo { text-decoration: underline wavy red 1px; text-underline-offset: 1px; }
.cursor { width: 1px; height: 15px; margin-top: auto; background: #000; }
.comments { flex: 0 0 315px; padding: 101px 0 0 10px; background: #fff; border-right: 1px solid #c6c6c6; color: #000; }
.comment { display: flex; gap: 10px; margin-bottom: 13px; font: 9px/13px "Noto Sans", "Open Sans", sans-serif; white-space: nowrap; }
.comment h2 { font-size: 11px; line-height: 13px; font-weight: 700; }
.comment.third { margin-top: 68px; }
.avatar { background: #2e96d5; }

/* Status bar */
.status { flex: none; display: flex; align-items: center; height: 22px; padding-left: 7px; background: #2b579a; color: #fff; font-size: 11px; white-space: nowrap; }
.words { margin-left: 20px; }
.proof { margin: 0 20px; }
.views { display: flex; align-items: center; height: 22px; margin-left: auto; padding-right: 10px; }
.views button { height: 22px; width: 38px; }
.views .current { background: #17407e; }
.views .zoom { width: 14px; }
.slider { appearance: none; width: 102px; height: 12px; margin: 0; background: linear-gradient(#fff, #fff) center / 100% 1px no-repeat; }
.slider::-webkit-slider-thumb { appearance: none; width: 4px; height: 11px; background: #fff; }
.percent { margin-left: 10px; }

/* Taskbar */
.taskbar {
  flex: none;
  display: flex;
  gap: 2px;
  height: 40px;
  border-top: 1px solid #4d6683;
  background: linear-gradient(90deg, #8ba3bf, #93abc7 60px, #a4bedb 110px, #adcbea 210px, #b1cfec calc(100% - 246px), #8ba2b9 calc(100% - 214px), #8ba2b9);
}
.start { width: 54px; }
.task { width: 60px; }
.ie { width: 63px; }
.wmp { width: 60px; padding-right: 4px; }
.open { border: 1px solid #4c637b; border-radius: 3px; background: linear-gradient(120deg, #d6e4f2, #b8cfe7 50%, #bfd6ec); box-shadow: inset 0 0 0 1px #e3eef9; }
.front { background: linear-gradient(120deg, #f2f7fc, #d9e6f4); }
.tray { display: flex; align-items: center; margin-left: auto; height: 39px; }
.tray button { width: 24px; }
.clock { display: flex; flex-direction: column; width: 74px; padding-left: 1px; text-align: center; color: #fff; font-size: 12px; line-height: 16px; }
.tray .desktop { width: 15px; height: 39px; border: 1px solid #5c7085; background: linear-gradient(135deg, #c3d0dd, #7d93aa 60%); }
```
